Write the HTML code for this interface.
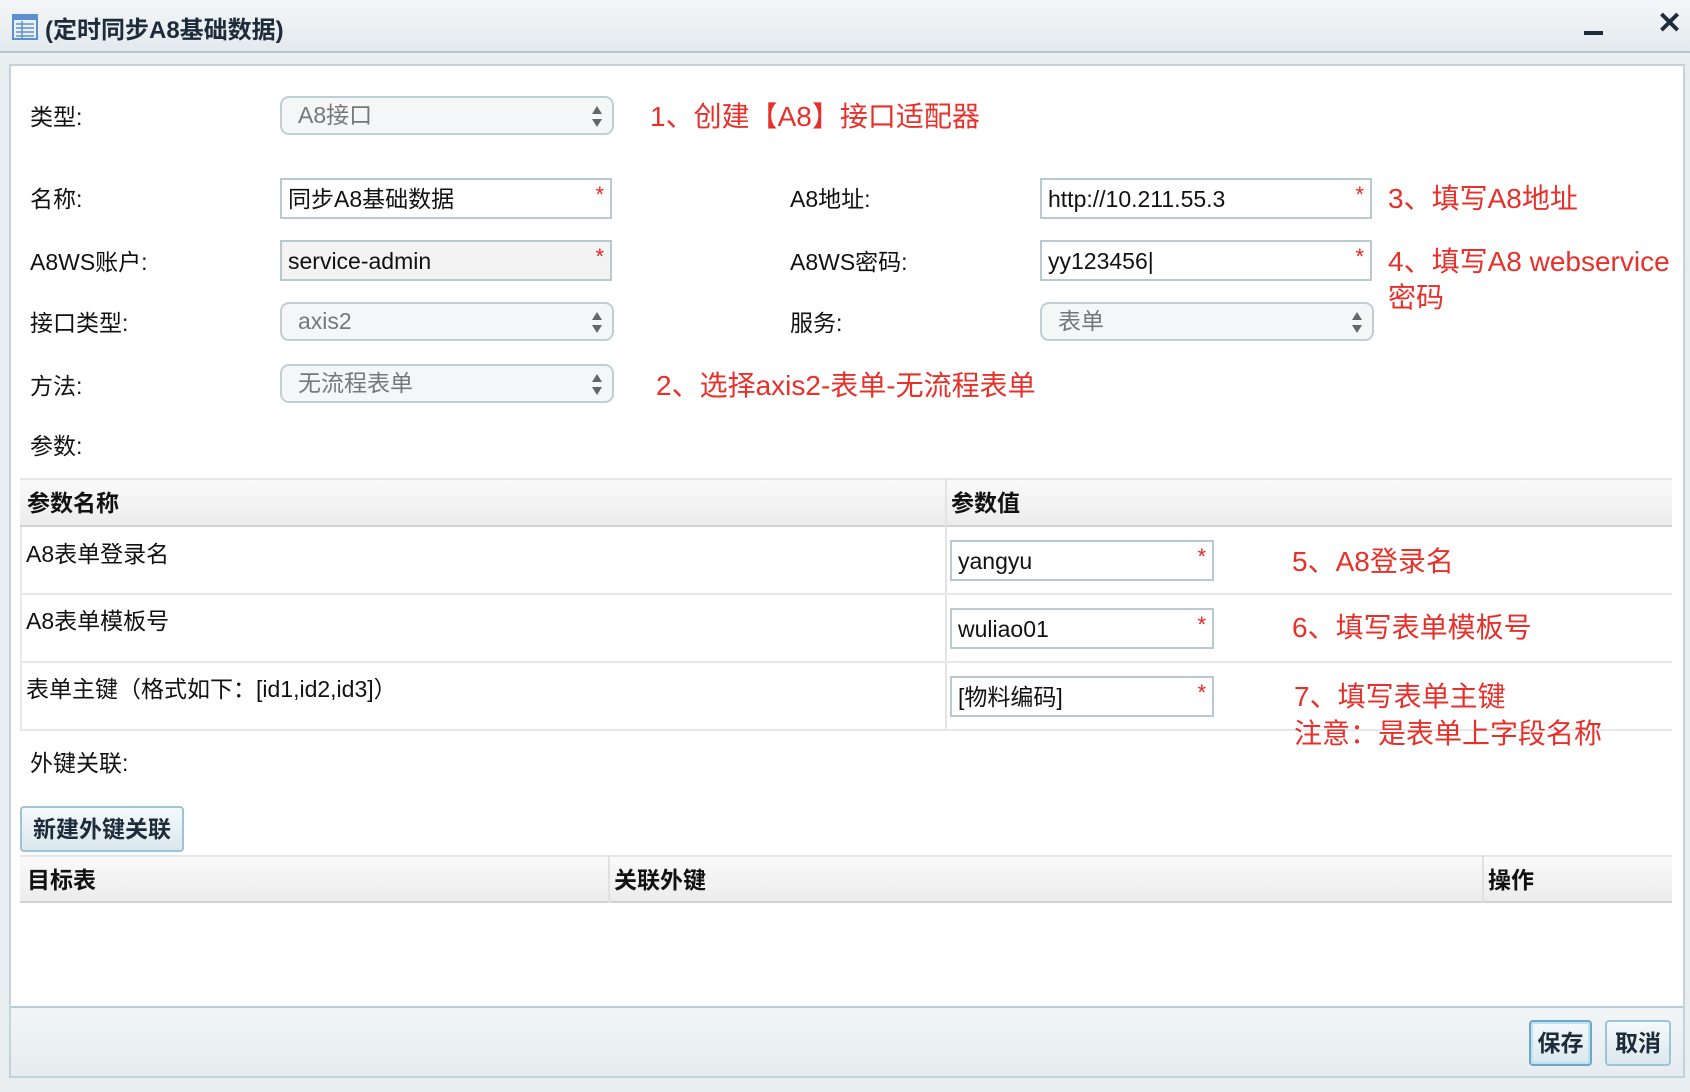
<!DOCTYPE html>
<html><head><meta charset="utf-8"><style>
*{box-sizing:border-box;margin:0;padding:0}
body{width:1690px;height:1092px;overflow:hidden;background:#e9eef1;font-family:"Liberation Sans","Noto Sans CJK SC",sans-serif;font-size:23px;color:#111;position:relative}
.a{position:absolute;white-space:nowrap}
.title{left:0;top:0;width:1690px;height:53px;background:linear-gradient(#f4f7f9,#e3e9ed);border-bottom:2px solid #b5c7cf}
.panel{left:9px;top:64px;width:1676px;height:1014px;background:#fff;border:2px solid #c3d3da}
.foot{left:11px;top:1006px;width:1672px;height:70px;background:linear-gradient(#f1f5f7,#e6ecef);border-top:2px solid #b8cdd5}
.lbl{transform:translateY(-50%)}
.sel{height:39px;border:2px solid #bfcfd6;border-radius:9px;background:#f4f6f7;color:#777;padding-left:16px;line-height:35px}
.sel:after{content:"";position:absolute;right:10px;top:8px;border:5px solid transparent;border-bottom:8px solid #666;border-top:0}
.sel:before{content:"";position:absolute;right:10px;top:21px;border:5px solid transparent;border-top:8px solid #666;border-bottom:0}
.inp{height:41px;border:2px solid #b9c9d0;background:#fff;padding-left:6px;line-height:38px}
.inp.g{background:#f3f3f3}
.star{position:absolute;right:6px;top:-4px;color:#e22;font-size:22px}
.red{color:#e8302a;font-size:28px;transform:translateY(-50%)}
.th{background:linear-gradient(#fafafa,#ececec);border-top:2px solid #e6e6e6;border-bottom:2px solid #d2d2d2;font-weight:bold}
.btn{border:2px solid #9cc3d6;border-radius:4px;background:linear-gradient(#f4f9fb,#dbe8ee);font-weight:bold;color:#1d2b3a;text-align:center}
</style></head><body>
<div class="a title"></div>
<svg class="a" style="left:12px;top:14px" width="26" height="26" viewBox="0 0 26 26"><rect x="1" y="1" width="24" height="24" fill="#eaf1fb" stroke="#5c8fd0" stroke-width="2"/><rect x="1" y="1" width="24" height="5" fill="#5c8fd0"/><path d="M4 10h18M4 14h18M4 18h18M4 22h18M10 7v17" stroke="#5c8fd0" stroke-width="1.5"/></svg>
<div class="a" style="left:45px;top:10px;font-size:24px;font-weight:bold;color:#1d2b3a">(定时同步A8基础数据)</div>
<div class="a" style="left:1584px;top:31px;width:19px;height:4px;background:#1d2b3a"></div>
<div class="a" style="left:1657px;top:6px;font-size:30px;font-weight:bold;color:#1d2b3a">✕</div>
<div class="a panel"></div>
<div class="a foot"></div>

<div class="a lbl" style="left:30px;top:115px">类型:</div>
<div class="a sel" style="left:280px;top:96px;width:334px">A8接口</div>
<div class="a red" style="left:650px;top:115px">1、创建【A8】接口适配器</div>

<div class="a lbl" style="left:30px;top:197px">名称:</div>
<div class="a inp" style="left:280px;top:178px;width:332px">同步A8基础数据<span class="star">*</span></div>
<div class="a lbl" style="left:790px;top:197px">A8地址:</div>
<div class="a inp" style="left:1040px;top:178px;width:332px">http://10.211.55.3<span class="star">*</span></div>
<div class="a red" style="left:1388px;top:197px">3、填写A8地址</div>

<div class="a lbl" style="left:30px;top:260px">A8WS账户:</div>
<div class="a inp g" style="left:280px;top:240px;width:332px">service-admin<span class="star">*</span></div>
<div class="a lbl" style="left:790px;top:260px">A8WS密码:</div>
<div class="a inp" style="left:1040px;top:240px;width:332px">yy123456|<span class="star">*</span></div>
<div class="a red" style="left:1388px;top:260px">4、填写A8 webservice</div>
<div class="a red" style="left:1388px;top:296px">密码</div>

<div class="a lbl" style="left:30px;top:321px">接口类型:</div>
<div class="a sel" style="left:280px;top:302px;width:334px">axis2</div>
<div class="a lbl" style="left:790px;top:321px">服务:</div>
<div class="a sel" style="left:1040px;top:302px;width:334px">表单</div>

<div class="a lbl" style="left:30px;top:384px">方法:</div>
<div class="a sel" style="left:280px;top:364px;width:334px">无流程表单</div>
<div class="a red" style="left:656px;top:384px">2、选择axis2-表单-无流程表单</div>

<div class="a lbl" style="left:30px;top:444px">参数:</div>

<div class="a th" style="left:20px;top:478px;width:1652px;height:49px"></div>
<div class="a" style="left:945px;top:478px;width:2px;height:252px;background:#e3e3e3"></div>
<div class="a" style="left:20px;top:527px;width:2px;height:204px;background:#e8e8e8"></div>
<div class="a" style="left:20px;top:593px;width:1652px;height:2px;background:#e8e8e8"></div>
<div class="a" style="left:20px;top:661px;width:1652px;height:2px;background:#e8e8e8"></div>
<div class="a" style="left:20px;top:729px;width:1652px;height:2px;background:#e8e8e8"></div>
<div class="a lbl" style="left:27px;top:501px;font-weight:bold">参数名称</div>
<div class="a lbl" style="left:951px;top:501px;font-weight:bold">参数值</div>
<div class="a lbl" style="left:26px;top:552px">A8表单登录名</div>
<div class="a lbl" style="left:26px;top:619px">A8表单模板号</div>
<div class="a lbl" style="left:26px;top:687px">表单主键（格式如下：[id1,id2,id3]）</div>
<div class="a inp" style="left:950px;top:540px;width:264px">yangyu<span class="star">*</span></div>
<div class="a inp" style="left:950px;top:608px;width:264px">wuliao01<span class="star">*</span></div>
<div class="a inp" style="left:950px;top:676px;width:264px">[物料编码]<span class="star">*</span></div>
<div class="a red" style="left:1292px;top:560px">5、A8登录名</div>
<div class="a red" style="left:1292px;top:626px">6、填写表单模板号</div>
<div class="a red" style="left:1294px;top:695px">7、填写表单主键</div>
<div class="a red" style="left:1294px;top:732px">注意：是表单上字段名称</div>

<div class="a lbl" style="left:30px;top:761px">外键关联:</div>
<div class="a btn" style="left:20px;top:806px;width:164px;height:46px;line-height:42px">新建外键关联</div>

<div class="a th" style="left:20px;top:855px;width:1652px;height:48px"></div>
<div class="a" style="left:608px;top:855px;width:2px;height:48px;background:#e0e0e0"></div>
<div class="a" style="left:1482px;top:855px;width:2px;height:48px;background:#e0e0e0"></div>
<div class="a lbl" style="left:27px;top:878px;font-weight:bold">目标表</div>
<div class="a lbl" style="left:614px;top:878px;font-weight:bold">关联外键</div>
<div class="a lbl" style="left:1488px;top:878px;font-weight:bold">操作</div>

<div class="a btn" style="left:1529px;top:1020px;width:63px;height:46px;line-height:42px;border-color:#6fa8c6;box-shadow:inset 0 0 0 2px #bfe3f2">保存</div>
<div class="a btn" style="left:1605px;top:1020px;width:66px;height:46px;line-height:42px">取消</div>
</body></html>
